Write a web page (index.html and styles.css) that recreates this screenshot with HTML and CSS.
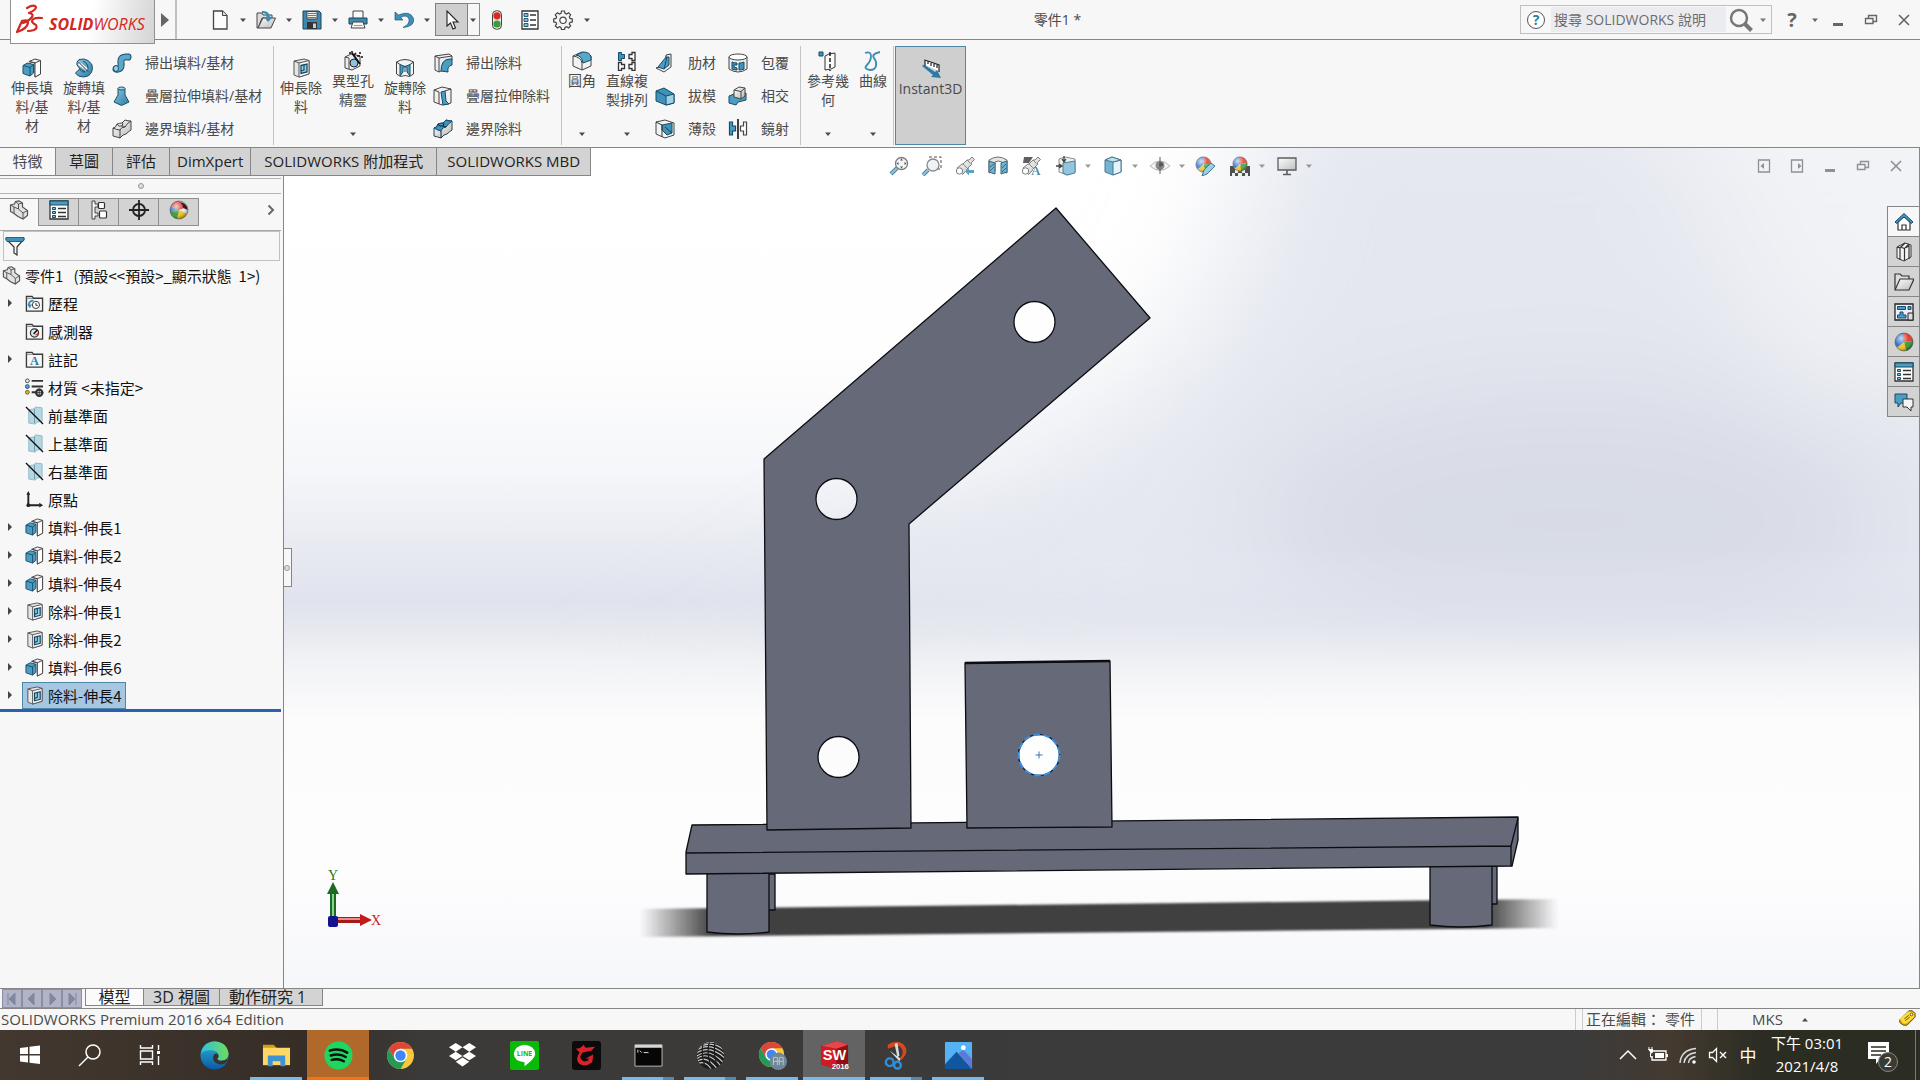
FILE: index.html
```html
<!DOCTYPE html>
<html lang="zh-Hant">
<head>
<meta charset="utf-8">
<meta name="viewport" content="width=device-width, initial-scale=1">
<title>零件1 - SOLIDWORKS Premium 2016</title>
<link rel="stylesheet" href="styles.css">
</head>
<body>
<svg class="sprite" aria-hidden="true">
  <defs>
    <linearGradient id="gBlue" x1="0" y1="0" x2="1" y2="1"><stop offset="0" stop-color="#8cc8e0"/><stop offset="1" stop-color="#2b7ba3"/></linearGradient>
    <linearGradient id="gGray" x1="0" y1="0" x2="1" y2="1"><stop offset="0" stop-color="#fff"/><stop offset="1" stop-color="#b8b8b8"/></linearGradient>
    <linearGradient id="gEdge" x1="0" y1="0" x2="0" y2="1"><stop offset="0" stop-color="#2bb5d8"/><stop offset="1" stop-color="#0c59a4"/></linearGradient>
    <linearGradient id="gEdge2" x1="0" y1="0" x2="1" y2="0"><stop offset="0" stop-color="#2fc2df"/><stop offset="1" stop-color="#6fdc57"/></linearGradient>
    <radialGradient id="gShine" cx=".35" cy=".3" r=".7"><stop offset="0" stop-color="#fff" stop-opacity=".75"/><stop offset=".6" stop-color="#fff" stop-opacity="0"/><stop offset="1" stop-color="#000" stop-opacity=".35"/></radialGradient>
    <clipPath id="sphere"><circle cx="15" cy="15" r="14"/></clipPath>
  </defs>
  <symbol id="caret" viewBox="0 0 8 8"><path d="M1 2.500h6L4 6z" fill="currentColor"/></symbol>
  <symbol id="new" viewBox="0 0 20 20"><path d="M3.500 1h9L17 5.500V19H3.500z" fill="#fdfdfd" stroke="#444" stroke-width="1.300"/><path d="M12.500 1v4.500H17" fill="#ddd" stroke="#444"/></symbol>
  <symbol id="open" viewBox="0 0 20 20"><path d="M1 3h5l1 2h9v3H6L2 18H1z" fill="#ddd" stroke="#444"/><path d="M2 18L7 8h12.500L15 18z" fill="url(#gGray)" stroke="#444"/><path d="M6 1q7-1 8 6h3l-5 5-4-5h2.500Q11 3 6 3z" fill="#3d8db3"/></symbol>
  <symbol id="save" viewBox="0 0 20 20"><path d="M1 1h16l2 2v16H1z" fill="#3e87ad" stroke="#17465f"/><path d="M5 1.500h10V9H5z" fill="#f0f0f0" stroke="#444"/><path d="M6 3.500h8M6 5.500h8M6 7.500h8" stroke="#777"/><path d="M5 12h10v7H5z" fill="#333"/><path d="M11 13.500h3V18h-3z" fill="#ccc"/></symbol>
  <symbol id="print" viewBox="0 0 20 20"><path d="M5 8V1h10v7" fill="#fafafa" stroke="#444"/><path d="M1 8h18v6H1z" fill="#3e87ad" stroke="#17465f"/><path d="M5 12h10l2 6H3z" fill="#f4f4f4" stroke="#444"/><path d="M6 15.500h8" stroke="#999"/></symbol>
  <symbol id="undo" viewBox="0 0 20 20"><path d="M1 2v8h8L6.500 7.500Q13 4 15 9q1 5-6 8.500 12-1 10.500-9Q16 0 4.500 5z" fill="#3f90b8" stroke="#1d5877" stroke-width=".7"/></symbol>
  <symbol id="arrowcur" viewBox="0 0 20 20"><path d="M5 1v15l3.500-3 2.500 6 2.500-1-2.500-6h5z" fill="#fff" stroke="#222" stroke-width="1.100"/></symbol>
  <symbol id="traffic" viewBox="0 0 20 20"><rect x="5.500" y=".7" width="9" height="18.600" rx="4" fill="#e4e4e4" stroke="#444"/><circle cx="10" cy="5.800" r="3.600" fill="#d92b1a"/><circle cx="10" cy="14" r="3.600" fill="#3b9c35"/></symbol>
  <symbol id="listic" viewBox="0 0 20 20"><path d="M2 1h16v18H2z" fill="#fff" stroke="#333" stroke-width="1.300"/><path d="M4 3.500h4v3H4zM4 8.500h4v3H4zM4 13.500h4v3H4z" fill="#7fb9d2" stroke="#245e7c"/><path d="M10 5h6M10 10h6M10 15h6" stroke="#333" stroke-width="1.400"/></symbol>
  <symbol id="gear" viewBox="0 0 20 20"><path d="M8.500 1h3l.5 2.300 1.600.7 2-1.300 2 2.100-1.200 2 .6 1.600 2.300.5v3l-2.300.5-.7 1.500 1.300 2-2 2.100-2-1.300-1.600.7-.5 2.300h-3L8 17.400l-1.600-.7-2 1.300-2.100-2.100 1.300-2L3 12.400l-2.300-.5v-3L3 8.400l.6-1.600-1.300-2 2.100-2.100 2 1.300L8 3.300z" fill="#f4f4f4" stroke="#444" stroke-width="1.200"/><circle cx="10" cy="10.300" r="3.200" fill="#fff" stroke="#444" stroke-width="1.200"/></symbol>
  <symbol id="extrude" viewBox="0 0 20 20"><path d="M7 3.500L13 1l5.500 1.500V16L13 19V5z" fill="#f0f0f0" stroke="#444"/><path d="M13 5v14l5.500-3V2.500z" fill="#fff" stroke="#444"/><path d="M7 3.500L13 5" stroke="#444"/><path d="M1 7.500L5.500 5l6 1.500V15L8 18l-7-2.500z" fill="#4c9dc2" stroke="#1b4e6b"/><path d="M1 7.500L8 9.500l3.500-3M8 9.500V18" fill="none" stroke="#1b4e6b"/></symbol>
  <symbol id="cut" viewBox="0 0 20 20"><path d="M3 3l10-2 5 1.500V16L8 19l-5-2z" fill="#e6e6e6" stroke="#555"/><path d="M8 5v14l10-3V2.500z" fill="#fafafa" stroke="#555"/><path d="M3 3l5 2" stroke="#555"/><path d="M10 7.500l6-1.500v8l-6 1.500z" fill="#9fd0e4" stroke="#174a66" stroke-width="1.300"/><path d="M10 13l3-1V7" fill="none" stroke="#174a66" stroke-width="1.200"/></symbol>
  <symbol id="revolve" viewBox="0 0 20 20"><path d="M5 1.500q5-1.500 9 1 5 3 4.500 8-1 8-9 8.500-6 0-8-4l4-4q2 4 5.500 3l-5-3-3-4q-1-3 2-5.500z" fill="url(#gBlue)" stroke="#1b4e6b"/><path d="M5 5.500l8 6" stroke="#fff" stroke-width="3"/><path d="M5 4.500l9 9" stroke="#222" fill="none"/><path d="M9 3q5 2 5 8" stroke="#1b4e6b" fill="none"/></symbol>
  <symbol id="sweep" viewBox="0 0 20 20"><path d="M4 16Q10 17 9 10T16 4" fill="none" stroke="#184b68" stroke-width="7" stroke-linecap="round"/><path d="M4 16Q10 17 9 10T16 4" fill="none" stroke="#5aa9cb" stroke-width="5" stroke-linecap="round"/><ellipse cx="4" cy="15.500" rx="2.500" ry="3" fill="#9ed0e4" stroke="#184b68"/></symbol>
  <symbol id="loft" viewBox="0 0 20 20"><path d="M6 2.500h7V9l4 7-7.500 3.500L2 16l4-7z" fill="url(#gBlue)" stroke="#1b4e6b"/><ellipse cx="9.500" cy="2.500" rx="3.500" ry="1.500" fill="#a4d3e6" stroke="#1b4e6b"/></symbol>
  <symbol id="boundary" viewBox="0 0 20 20"><path d="M1 9q3 0 4-4 3-1 5-1l3-3q3 1 6 1v9q-3 2-5 4-3 0-6 4-3-1-7-2z" fill="url(#gGray)" stroke="#444"/><path d="M1 9q4 2 7 2 1-3 5-3 2-4 6-6M8 11v8M5 5q1 3 5 2l1-3M13 8q-2-1-3-1" fill="none" stroke="#444"/></symbol>
  <symbol id="boundarycut" viewBox="0 0 20 20"><path d="M1 9q3 0 4-4 3-1 5-1l3-3q3 1 6 1v9q-3 2-5 4-3 0-6 4-3-1-7-2z" fill="url(#gGray)" stroke="#245"/><path d="M1 9q3 0 4-4 3-1 5-1l3-3q3 1 6 1-4 3-6 6-4 0-5 4-4-1-7-3z" fill="#3f93bb" stroke="#174a66"/><path d="M5 5q1 3 5 2l1-3M13 8q-2-1-3-1M8 12v7" fill="none" stroke="#123"/></symbol>
  <symbol id="hole" viewBox="0 0 20 20"><path d="M2 6l6-3 9 2v10l-8 4-7-2z" fill="#eee" stroke="#444"/><path d="M2 6l4 1v11" fill="none" stroke="#444"/><circle cx="11" cy="12" r="4" fill="#8dc4dc" stroke="#222"/><path d="M9 2l8 11" stroke="#111" stroke-width="2"/><path d="M6 2h2M9 0v2M13 2l-2 2M17 1v2M14 5h3M19 5v2" stroke="#111" stroke-width="1.500"/></symbol>
  <symbol id="revcut" viewBox="0 0 20 20"><path d="M1.500 4q8.500-5 17 0v12l-4 2.500q-4-2-9 0l-4-2.500z" fill="#f4f4f4" stroke="#444"/><path d="M5 6.500l5 2 5-2V18l-3-4V9.500L10 8.500 8 9.500V14l-3 4z" fill="#4c9dc2" stroke="#174a66"/><path d="M10 8.500V14M1.500 4L5 6.500M18.500 4L15 6.500" stroke="#174a66"/></symbol>
  <symbol id="sweepcut" viewBox="0 0 20 20"><path d="M2 3l14-2 3 2v4q-6 0-7 9l-6 3-4-2z" fill="#eee" stroke="#444"/><path d="M17 6q-9 0-9 12l7 1q-1-6 4-7V6z" fill="#4c9dc2" stroke="#174a66"/><path d="M2 3l4 2v14M6 5l13-2" fill="none" stroke="#444"/></symbol>
  <symbol id="loftcut" viewBox="0 0 20 20"><path d="M1 4l8-3 9 2v14l-9 2-8-3z" fill="#f0f0f0" stroke="#444"/><path d="M8 6l4-1 1 10 3 3-6 1z" fill="#4c9dc2" stroke="#174a66"/><path d="M1 4l5 2v12M18 3l-6 2" stroke="#444" fill="none"/></symbol>
  <symbol id="fillet" viewBox="0 0 20 20"><path d="M1 5l9-4 9 4v10l-9 4-9-4z" fill="#f2f2f2" stroke="#444"/><path d="M1 5q8 1 9 7v7" fill="none" stroke="#444"/><path d="M6 3l5-2q7 0 8 5v3l-8 3q-1-7-7-8z" fill="#59a8ca" stroke="#174a66"/></symbol>
  <symbol id="pattern" viewBox="0 0 20 20"><path d="M1.500 1.500h3v2h3v4h-3v2h-3z" fill="#3f93bb" stroke="#174a66"/><path d="M18 1.500h-3v2h-3v4h3v2h3zM1.500 11.500h3v2h3v4h-3v2h-3zM18 11.500h-3v2h-3v4h3v2h3z" fill="#fff" stroke="#333" stroke-width="1.300"/></symbol>
  <symbol id="rib" viewBox="0 0 20 20"><path d="M11 2l5-1v13l-7 5-8-4 9-3z" fill="#eee" stroke="#444"/><path d="M11 4L3 14l6 2 5-4V4z" fill="#4c9dc2" stroke="#174a66"/><path d="M9 16l3-12" stroke="#174a66"/></symbol>
  <symbol id="draft" viewBox="0 0 20 20"><path d="M1 5l8-3 10 6v9l-8 2-10-4z" fill="#3f93bb" stroke="#174a66"/><path d="M11 10l8-2v9l-8 2z" fill="#9fd0e4" stroke="#174a66"/><path d="M1 5l10 5" stroke="#174a66"/></symbol>
  <symbol id="shell" viewBox="0 0 20 20"><path d="M1 3l9-2 9 3v12l-9 3-9-4z" fill="#f2f2f2" stroke="#444"/><path d="M7 6l10-2v10l-5 2-5-5z" fill="#3f93bb" stroke="#174a66"/><path d="M1 3l6 3v12M10 8l7 6" fill="none" stroke="#333"/></symbol>
  <symbol id="wrap" viewBox="0 0 20 20"><path d="M1 4v12q9 6 18 0V4" fill="#eee" stroke="#444"/><ellipse cx="10" cy="4" rx="9" ry="3" fill="#fff" stroke="#444"/><path d="M4 9q2 1 5 1v2H6v2l3 1v2q-3 0-5-1zM16 9q-2 1-5 1v7q3 0 5-1z" fill="#3f93bb" stroke="#174a66"/></symbol>
  <symbol id="intersect" viewBox="0 0 20 20"><path d="M1 10l5-2 4 1 8-2v7l-8 2-2 3-7-2z" fill="#4c9dc2" stroke="#174a66"/><path d="M6 4l5-3 6 1v8l-4 3-7-2z" fill="url(#gGray)" stroke="#444"/><path d="M6 4l7 1.500V13M13 5.500L17 2" fill="none" stroke="#444"/></symbol>
  <symbol id="mirror" viewBox="0 0 20 20"><path d="M1.500 3h3v4h3v5h-3v4h-3z" fill="#4c9dc2" stroke="#174a66" stroke-width="1.200"/><path d="M18.500 3h-3v4h-3v5h3v4h3z" fill="#fff" stroke="#444" stroke-width="1.200"/><path d="M10 0v20" stroke="#111" stroke-width="1.600"/></symbol>
  <symbol id="refgeo" viewBox="0 0 20 20"><path d="M1 1h4v4H1z" fill="#3f93bb" stroke="#174a66"/><path d="M7 5l4-2 6-1v14l-4 2-6 1z" fill="#fafafa" stroke="#333"/><path d="M12 1v19" stroke="#111" stroke-width="1.400" stroke-dasharray="4 2"/></symbol>
  <symbol id="curve" viewBox="0 0 20 20"><path d="M2 2q6-2 6 3t-4 9 3 5q5 0 6-4t-2-8 6-6" fill="none" stroke="#3d8db3" stroke-width="1.800"/></symbol>
  <symbol id="instant" viewBox="0 0 22 22"><path d="M5 2l14 6v6L5 8z" fill="#fff"/><path d="M5 9V3l14 5v7M8 4v3M11 5v4M14 7v3M17 8v3" fill="none" stroke="#222" stroke-width="1.200"/><path d="M2 9l2-1.500 11 7.500 2-2 4 8-10-1 2-2z" fill="#2c7ba5"/></symbol>
  <symbol id="part" viewBox="0 0 20 20"><path d="M1.500 5l4-1 1-2.500L10 .800 13.500 3v4l5 3.500v5L14 19l-5-2.500-4-3-3.500-2z" fill="#e2e2e2" stroke="#555" stroke-width="1.200"/><path d="M6.500 1.500l3 2.500 4-1M9.500 4v5l4.500 4 4.500-2.500M14 13v6M1.500 5L5 7l4.500 2M5 7v6.500" fill="none" stroke="#555"/></symbol>
  <symbol id="props" viewBox="0 0 20 20"><path d="M1 1h18v18H1z" fill="#fff" stroke="#333" stroke-width="1.300"/><path d="M1 1h18v4H1z" fill="#4c9dc2" stroke="#174a66"/><path d="M3.500 7.500h3v2h-3zM3.500 11.500h3v2h-3zM3.500 15.500h3v2h-3z" fill="#8cc8e0" stroke="#174a66"/><path d="M9 8.500h8M9 12.500h8M9 16.500h8" stroke="#333" stroke-width="1.400"/></symbol>
  <symbol id="config" viewBox="0 0 20 20"><path d="M3 1h3v3h3v3H6v6h3v3H6v3H3z" fill="#f4f4f4" stroke="#444"/><rect x="9.500" y="2.500" width="6" height="6" rx="1" fill="#fff" stroke="#333" stroke-width="1.200"/><rect x="10.500" y="11" width="7" height="7" rx="1" fill="#fff" stroke="#333" stroke-width="1.200"/></symbol>
  <symbol id="target" viewBox="0 0 20 20"><circle cx="10" cy="10" r="6" fill="none" stroke="#222" stroke-width="1.800"/><path d="M10 0v20M0 10h20" stroke="#222" stroke-width="1.800"/></symbol>
  <symbol id="ball" viewBox="0 0 20 20"><path d="M10 10V1A9 9 0 0 1 19 9z" fill="#e23b2c"/><path d="M10 10L19 9A9 9 0 0 1 12 19z" fill="#3e9b3a"/><path d="M10 10l2 9A9 9 0 0 1 3 15.500z" fill="#f3c51c"/><path d="M10 10l-7 5.500A9 9 0 0 1 10 1z" fill="#2f6fc8"/><circle cx="10" cy="10" r="9" fill="url(#gShine)" stroke="#555" stroke-width=".6"/></symbol>
  <symbol id="dispball" viewBox="0 0 20 20"><path d="M10 10L2 6A9 9 0 0 1 10 1l8.500 6z" fill="#d9322a"/><path d="M10 10L18.500 7A9 9 0 0 1 18 14z" fill="#e8e8e8"/><path d="M10 10l8 4A9 9 0 0 1 8 19z" fill="#f3c51c"/><path d="M10 10l-2 9A9 9 0 0 1 1 11z" fill="#3e9b3a"/><path d="M10 10L1 11A9 9 0 0 1 2 6z" fill="#2f6fc8"/><circle cx="10" cy="10" r="9" fill="url(#gShine)" stroke="#555" stroke-width=".6"/><path d="M11 2q7 1 7.500 8l-4-2q-1-4-3.500-6z" fill="#2b1d1d"/></symbol>
  <symbol id="funnel" viewBox="0 0 20 20"><path d="M1 3h18l-7 8v8l-3-2v-6z" fill="#f6f6f6" stroke="#333" stroke-width="1.200"/><path d="M1 1.500h18V4l-1 1.500H2L1 4z" fill="#3f93bb" stroke="#174a66" stroke-width=".8"/></symbol>
  <symbol id="fbase" viewBox="0 0 20 20"><path d="M1.500 2.500h6l1.500 2h9.500v13.500h-17z" fill="#f6f6f6" stroke="#3a3a3a" stroke-width="1.400"/><path d="M1.500 4.500h7" stroke="#777"/></symbol>
  <symbol id="history" viewBox="0 0 20 20"><use href="#fbase"/><circle cx="11.500" cy="11.500" r="3.800" fill="#fff" stroke="#333"/><path d="M11.500 9.500v2.500h2" fill="none" stroke="#333"/><path d="M4 12q0-5 5-5" stroke="#3d8db3" stroke-width="2" fill="none"/><path d="M2.500 11h5l-2.500 4z" fill="#3d8db3"/></symbol>
  <symbol id="sensor" viewBox="0 0 20 20"><use href="#fbase"/><circle cx="10" cy="11.500" r="4.300" fill="#dbe9f2" stroke="#333" stroke-width="1.300"/><path d="M9 12.500l4-4" stroke="#111" stroke-width="1.500"/><path d="M10 14h4v-3z" fill="#e2421f"/></symbol>
  <symbol id="material" viewBox="0 0 20 20"><path d="M7 3h12M7 9h12M7 15h5" stroke="#333" stroke-width="2"/><circle cx="2.500" cy="3" r="2" fill="#eee" stroke="#444"/><circle cx="2.500" cy="9" r="2" fill="#4cb0d8" stroke="#245"/><circle cx="2.500" cy="15" r="2" fill="#e8b91c" stroke="#654"/><circle cx="15" cy="15.500" r="3.200" fill="none" stroke="#333" stroke-width="2.400"/><path d="M15 11v9M10.500 15.500h9" stroke="#333"/></symbol>
  <symbol id="plane" viewBox="0 0 20 20"><path d="M4 4l6-1 1-2 7 1v14l-6 1-1 2-7-1z" fill="#b5d7e4" stroke="#8fb8c8"/><path d="M10 3v15" stroke="#6e98a8"/><path d="M1 1l18 18" stroke="#111" stroke-width="1.400"/></symbol>
  <symbol id="origin" viewBox="0 0 20 20"><path d="M3.500 4v12h12" fill="none" stroke="#222" stroke-width="2"/><path d="M1.500 5l2-4 2 4zM15 13.500l4 2.500-4 2.500z" fill="#222"/><circle cx="3.500" cy="16" r="2" fill="#222"/></symbol>
  <symbol id="tri" viewBox="0 0 8 8"><path d="M2 0l4 4-4 4z" fill="#444"/></symbol>
  <symbol id="chev" viewBox="0 0 8 12"><path d="M1.500 1.500L6 6l-4.500 4.500" fill="none" stroke="#666" stroke-width="2"/></symbol>
  <symbol id="zoomfit" viewBox="0 0 20 20"><path d="M8 12l-6 6" stroke="#2d6e90" stroke-width="4"/><path d="M8 12l-6 6" stroke="#7fb9d2" stroke-width="2"/><circle cx="12.500" cy="7.500" r="6" fill="#f4f4f4" stroke="#666" stroke-width="1.300"/><path d="M12.500 2.500l1.500 2h-3zM12.500 12.500l1.500-2h-3zM7.500 7.500l2-1.500v3zM17.500 7.500l-2-1.500v3z" fill="#333"/></symbol>
  <symbol id="zoomarea" viewBox="0 0 20 20"><path d="M7 1h12v12h-6" fill="none" stroke="#333" stroke-dasharray="3 2"/><path d="M6 14l-5 5" stroke="#2d6e90" stroke-width="4"/><path d="M6 14l-5 5" stroke="#7fb9d2" stroke-width="2"/><circle cx="11" cy="9" r="6" fill="#eef0f2" stroke="#777" stroke-width="1.300"/></symbol>
  <symbol id="scope" viewBox="0 0 20 20"><path d="M2 12l5-4 1 0 4-4 2 0 3-3 2.500 2.500-3 3v2l-5 5v1l-4 4z" fill="url(#gGray)" stroke="#666"/><path d="M8 8l4 4M12 4l3.500 3.500" stroke="#777"/><circle cx="4.500" cy="15" r="3.200" fill="#fff" stroke="#666"/></symbol>
  <symbol id="prevview" viewBox="0 0 20 20"><use href="#scope"/><path d="M10 15.500l4-4v2.500h5v3h-5v2.500z" fill="#3f93bb"/></symbol>
  <symbol id="section" viewBox="0 0 20 20"><path d="M1 4q9-6 18 0v13l-5-1V6q-4-2-7 0v9l-6 2z" fill="#e0e0e0" stroke="#555"/><path d="M1 5l6 2v11l-6-2zM13 7l6-2v11l-6 2z" fill="#5aa9cb" stroke="#174a66"/><path d="M2 11l4-3M2 15l4-4M14 12l4-4M14 16l4-4" stroke="#174a66"/></symbol>
  <symbol id="orient" viewBox="0 0 20 20"><path d="M3 3l6-2 10 2v13l-8 3-8-3z" fill="#eee" stroke="#777"/><path d="M7 7l12-2v12l-8 2-4-2z" fill="#7fbdd8" stroke="#2c6c8c"/><path d="M8 0v5M6 3l2 3 2-3M0 10h5M3 8l3 2-3 2" fill="none" stroke="#222" stroke-width="1.300"/></symbol>
  <symbol id="style" viewBox="0 0 20 20"><path d="M2 4l7-3 9 3v12l-8 3-8-3z" fill="#5aa9cb" stroke="#2a5f7b"/><path d="M10 6l8-2v12l-8 3z" fill="#e5f2f8" stroke="#2a5f7b"/><path d="M2 4l8 2 8-2-9-3z" fill="#b5dae8" stroke="#2a5f7b"/></symbol>
  <symbol id="eye" viewBox="0 0 20 20"><path d="M0 10q10-10 20 0-10 9-20 0z" fill="#f4f4f4" stroke="#aaa"/><circle cx="10" cy="9.500" r="4.500" fill="#777"/><circle cx="11" cy="8.500" r="2" fill="#333"/><path d="M10 1v17" stroke="#444"/></symbol>
  <symbol id="pencilball" viewBox="0 0 20 20"><use href="#ball" width="17" height="17"/><path d="M9 14l7-7 4 3-8 8-5 2z" fill="#8cc8e0" stroke="#245e7c"/></symbol>
  <symbol id="sceneball" viewBox="0 0 20 20"><path d="M0 10h20v10H0z" fill="#333"/><path d="M2 17h3v3H2zM15 17h3v3h-3zM8 17h4v3H8zM5 14h3v3H5zM12 14h3v3h-3z" fill="#eee"/><use href="#ball" x="2" y="0" width="16" height="16"/></symbol>
  <symbol id="monitor" viewBox="0 0 20 20"><path d="M1 2h18v12H1z" fill="url(#gGray)" stroke="#444" stroke-width="1.300"/><path d="M10 14v4M6 18.500h8" stroke="#444" stroke-width="1.600"/></symbol>
  <symbol id="min" viewBox="0 0 14 14"><path d="M2 11.500h10" stroke="currentColor" stroke-width="3"/></symbol>
  <symbol id="restore" viewBox="0 0 14 14"><path d="M4.500 5V2.500h8v6H9M1.500 5.500H9v5H1.500z" fill="none" stroke="currentColor" stroke-width="1.400"/></symbol>
  <symbol id="close" viewBox="0 0 14 14"><path d="M2 2l10 10M12 2L2 12" stroke="currentColor" stroke-width="1.600"/></symbol>
  <symbol id="paneL" viewBox="0 0 14 14"><path d="M1.500 1h11v12h-11z" fill="none" stroke="currentColor" stroke-width="1.300"/><path d="M7 4L3.500 7 7 10z" fill="currentColor"/></symbol>
  <symbol id="paneR" viewBox="0 0 14 14"><path d="M1.500 1h11v12h-11z" fill="none" stroke="currentColor" stroke-width="1.300"/><path d="M8 4l3.500 3L8 10z" fill="currentColor"/></symbol>
  <symbol id="home" viewBox="0 0 20 20"><path d="M4 10v8h12v-8l-6-6z" fill="#fff" stroke="#333" stroke-width="1.200"/><path d="M8 18v-5h4v5" fill="none" stroke="#333" stroke-width="1.200"/><path d="M1 10l9-8.500L19 10l-1.500 1.500L10 5l-7.500 6.500z" fill="#3f93bb" stroke="#174a66"/></symbol>
  <symbol id="books" viewBox="0 0 20 20"><path d="M3 5l8-4 6 2v12l-7 4-7-3z" fill="#f4f4f4" stroke="#333"/><path d="M3 5l3 1v12M6 6l5-5M7.500 5.500l3 1v12M11 6l4-4M12 5.500l3-1.500v13" fill="none" stroke="#333" stroke-width="1.200"/></symbol>
  <symbol id="folder" viewBox="0 0 20 20"><path d="M1 17V2h5l2 2h7v3" fill="#ddd" stroke="#333" stroke-width="1.200"/><path d="M1 18L6 7h14l-5 11z" fill="url(#gGray)" stroke="#333" stroke-width="1.200"/></symbol>
  <symbol id="palette" viewBox="0 0 20 20"><path d="M1 2h18v16H1z" fill="#eef" stroke="#222" stroke-width="1.300"/><path d="M3.500 4.500h8v3h-8zM14 4.500h3v3h-3zM6 10h3v3h3v3H3.500v-3H6z" fill="#4c9dc2" stroke="#174a66"/><path d="M14 11h5v7h-5z" fill="#ddd" stroke="#222"/></symbol>
  <symbol id="forum" viewBox="0 0 20 20"><path d="M1 2h12v9H7l-3 4v-4H1z" fill="#4c9dc2" stroke="#174a66"/><path d="M9 7h10v8h-2v4l-4-4H9z" fill="#f6f6f6" stroke="#333"/></symbol>
  <symbol id="mag" viewBox="0 0 24 24"><circle cx="10" cy="10" r="8" fill="none" stroke="#777" stroke-width="2.500"/><path d="M15.500 15.500l7 7" stroke="#777" stroke-width="4"/></symbol>
  <symbol id="tag" viewBox="0 0 20 20"><path d="M2 12L12 2h4l3 3v4l-9 9H6l-4-3z" fill="#e2a80f" stroke="#5d4200"/><path d="M2 11L11 3h4l3 2v4l-9 7H6z" fill="#fbdd3c"/><circle cx="15" cy="6" r="1.500" fill="#fff" stroke="#5d4200"/><path d="M7 11l5-4M8 13l5-4" stroke="#5d4200"/></symbol>
  <symbol id="chrome" viewBox="0 0 28 28"><circle cx="14" cy="14" r="13" fill="#f9c93a"/><path d="M14 7.500h11.300A13 13 0 0 0 2.700 7.500l5.700 9.800z" fill="#d9483b"/><path d="M2.700 7.500A13 13 0 0 0 14 27l5.600-9.700-5.600 3-5.600-3z" fill="#259a56"/><circle cx="14" cy="14" r="6.500" fill="#fff"/><circle cx="14" cy="14" r="5" fill="#4285f4"/></symbol>
</svg>

<div class="app">
  <header class="titlebar">
    <div class="logo">
      <svg width="28" height="30" viewBox="0 0 28 30" aria-hidden="true"><g fill="none" stroke="#d3281f" stroke-width="2.200" stroke-linecap="round" stroke-linejoin="round"><path d="M11 4q7-4 9-1 0 3-7 6 5 1 3 4-3 4-9 6"/><path d="M6 17q6-2 6 2-1 6-11 9L6 17"/><path d="M26 14q-9-1-10 3 0 2 4 4 2 3-2 5-3 1-6 1"/></g></svg>
      <span class="wordmark"><b>SOLID</b>WORKS</span>
    </div>
    <button class="logo-more" aria-label="功能表"><svg width="8" height="14" viewBox="0 0 8 14"><path d="M0 0l8 7-8 7z" fill="#666"/></svg></button>
    <div class="quick">
      <button class="q" aria-label="新增"><svg><use href="#new"/></svg></button><button class="c" aria-label="更多"><svg><use href="#caret"/></svg></button>
      <button class="q" aria-label="開啟"><svg><use href="#open"/></svg></button><button class="c" aria-label="更多"><svg><use href="#caret"/></svg></button>
      <button class="q" aria-label="儲存"><svg><use href="#save"/></svg></button><button class="c" aria-label="更多"><svg><use href="#caret"/></svg></button>
      <button class="q" aria-label="列印"><svg><use href="#print"/></svg></button><button class="c" aria-label="更多"><svg><use href="#caret"/></svg></button>
      <button class="q" aria-label="復原"><svg><use href="#undo"/></svg></button><button class="c" aria-label="更多"><svg><use href="#caret"/></svg></button>
      <span class="picked"><button class="w on" aria-label="選取"><svg><use href="#arrowcur"/></svg></button><button class="c" aria-label="更多"><svg><use href="#caret"/></svg></button></span>
      <button class="w" aria-label="重新計算"><svg><use href="#traffic"/></svg></button>
      <button class="w" aria-label="檔案屬性"><svg><use href="#listic"/></svg></button>
      <button class="w" aria-label="選項"><svg><use href="#gear"/></svg></button><button class="c" aria-label="更多"><svg><use href="#caret"/></svg></button>
    </div>
    <h1 class="doc-title">零件1 *</h1>
    <form class="search">
      <span class="search-help">?</span>
      <input type="text" aria-label="搜尋" placeholder="搜尋 SOLIDWORKS 說明">
      <button type="button" class="search-go" aria-label="搜尋"><svg><use href="#mag"/></svg></button>
      <button type="button" class="c" aria-label="搜尋範圍"><svg><use href="#caret"/></svg></button>
    </form>
    <div class="window-ctl">
      <button class="qm">?</button><button class="c" aria-label="說明選單"><svg><use href="#caret"/></svg></button>
      <button class="w" aria-label="最小化"><svg><use href="#min"/></svg></button>
      <button class="w" aria-label="還原"><svg><use href="#restore"/></svg></button>
      <button class="w" aria-label="關閉"><svg><use href="#close"/></svg></button>
    </div>
  </header>

  <nav class="ribbon" aria-label="特徵工具列">
    <section class="group g-boss">
      <button class="big low"><svg><use href="#extrude"/></svg><span>伸長填<br>料/基<br>材</span></button>
      <button class="big low"><svg><use href="#revolve"/></svg><span>旋轉填<br>料/基<br>材</span></button>
      <div class="stack">
        <button><svg><use href="#sweep"/></svg>掃出填料/基材</button>
        <button><svg><use href="#loft"/></svg>疊層拉伸填料/基材</button>
        <button><svg><use href="#boundary"/></svg>邊界填料/基材</button>
      </div>
    </section>
    <section class="group g-cut">
      <button class="big low"><svg><use href="#cut"/></svg><span>伸長除<br>料</span></button>
      <button class="big"><svg><use href="#hole"/></svg><span>異型孔<br>精靈</span><svg class="drop"><use href="#caret"/></svg></button>
      <button class="big low"><svg><use href="#revcut"/></svg><span>旋轉除<br>料</span></button>
      <div class="stack">
        <button><svg><use href="#sweepcut"/></svg>掃出除料</button>
        <button><svg><use href="#loftcut"/></svg>疊層拉伸除料</button>
        <button><svg><use href="#boundarycut"/></svg>邊界除料</button>
      </div>
    </section>
    <section class="group g-feat">
      <button class="big narrow"><svg><use href="#fillet"/></svg><span>圓角</span><svg class="drop"><use href="#caret"/></svg></button>
      <button class="big"><svg><use href="#pattern"/></svg><span>直線複<br>製排列</span><svg class="drop"><use href="#caret"/></svg></button>
      <div class="stack short">
        <button><svg><use href="#rib"/></svg>肋材</button>
        <button><svg><use href="#draft"/></svg>拔模</button>
        <button><svg><use href="#shell"/></svg>薄殼</button>
      </div>
      <div class="stack short">
        <button><svg><use href="#wrap"/></svg>包覆</button>
        <button><svg><use href="#intersect"/></svg>相交</button>
        <button><svg><use href="#mirror"/></svg>鏡射</button>
      </div>
    </section>
    <section class="group g-ref">
      <button class="big"><svg><use href="#refgeo"/></svg><span>參考幾<br>何</span><svg class="drop"><use href="#caret"/></svg></button>
      <button class="big narrow"><svg><use href="#curve"/></svg><span>曲線</span><svg class="drop"><use href="#caret"/></svg></button>
    </section>
    <button class="big instant"><svg><use href="#instant"/></svg><span>Instant3D</span></button>
  </nav>

  <main class="work">
    <nav class="tabs" aria-label="CommandManager">
      <button class="active">特徵</button><button>草圖</button><button>評估</button><button class="tight">DimXpert</button><button>SOLIDWORKS 附加程式</button><button class="last">SOLIDWORKS MBD</button>
    </nav>

    <aside class="panel">
      <div class="grip"><i></i></div>
      <div class="panel-tabs">
        <button class="active" aria-label="特徵樹"><svg><use href="#part"/></svg></button>
        <button aria-label="屬性"><svg><use href="#props"/></svg></button>
        <button aria-label="模型組態"><svg><use href="#config"/></svg></button>
        <button aria-label="尺寸專家"><svg><use href="#target"/></svg></button>
        <button aria-label="顯示"><svg><use href="#dispball"/></svg></button>
        <button class="more" aria-label="更多"><svg><use href="#chev"/></svg></button>
      </div>
      <label class="filter"><svg><use href="#funnel"/></svg><input type="text" aria-label="篩選"></label>
      <ul class="tree">
        <li class="root"><svg class="ic"><use href="#part"/></svg><span>零件1&nbsp;&nbsp; (預設&lt;&lt;預設&gt;_顯示狀態&nbsp; 1&gt;)</span></li>
        <li class="exp"><svg class="tw"><use href="#tri"/></svg><span class="node"><svg class="ic"><use href="#history"/></svg>歷程</span></li>
        <li><span class="node"><svg class="ic"><use href="#sensor"/></svg>感測器</span></li>
        <li class="exp"><svg class="tw"><use href="#tri"/></svg><span class="node"><svg class="ic" viewBox="0 0 20 20"><use href="#fbase"/><text x="10" y="16" class="letter">A</text></svg>註記</span></li>
        <li><span class="node"><svg class="ic"><use href="#material"/></svg>材質 &lt;未指定&gt;</span></li>
        <li><span class="node"><svg class="ic"><use href="#plane"/></svg>前基準面</span></li>
        <li><span class="node"><svg class="ic"><use href="#plane"/></svg>上基準面</span></li>
        <li><span class="node"><svg class="ic"><use href="#plane"/></svg>右基準面</span></li>
        <li><span class="node"><svg class="ic"><use href="#origin"/></svg>原點</span></li>
        <li class="exp"><svg class="tw"><use href="#tri"/></svg><span class="node"><svg class="ic"><use href="#extrude"/></svg>填料-伸長1</span></li>
        <li class="exp"><svg class="tw"><use href="#tri"/></svg><span class="node"><svg class="ic"><use href="#extrude"/></svg>填料-伸長2</span></li>
        <li class="exp"><svg class="tw"><use href="#tri"/></svg><span class="node"><svg class="ic"><use href="#extrude"/></svg>填料-伸長4</span></li>
        <li class="exp"><svg class="tw"><use href="#tri"/></svg><span class="node"><svg class="ic"><use href="#cut"/></svg>除料-伸長1</span></li>
        <li class="exp"><svg class="tw"><use href="#tri"/></svg><span class="node"><svg class="ic"><use href="#cut"/></svg>除料-伸長2</span></li>
        <li class="exp"><svg class="tw"><use href="#tri"/></svg><span class="node"><svg class="ic"><use href="#extrude"/></svg>填料-伸長6</span></li>
        <li class="exp"><svg class="tw"><use href="#tri"/></svg><span class="node sel"><svg class="ic"><use href="#cut"/></svg>除料-伸長4</span></li>
      </ul>
      <div class="rollback"></div>
    </aside>

    <section class="viewport">
      <svg class="scene" viewBox="284 148 1635 840" preserveAspectRatio="xMidYMid slice" role="img" aria-label="零件模型">
        <defs>
          <linearGradient id="sky" x1="0" y1="0" x2="0" y2="1"><stop offset="0" stop-color="#fff"/><stop offset=".24" stop-color="#fefefe"/><stop offset=".38" stop-color="#f6f7fa"/><stop offset=".47" stop-color="#e9ebf2"/><stop offset=".54" stop-color="#e0e3ed"/><stop offset=".57" stop-color="#e6e8ef"/><stop offset=".61" stop-color="#f1f2f5"/><stop offset=".68" stop-color="#fcfcfd"/><stop offset=".86" stop-color="#fdfdfe"/><stop offset="1" stop-color="#f6f7fa"/></linearGradient>
          <linearGradient id="fadeDown" x1="0" y1="148" x2="0" y2="988" gradientUnits="userSpaceOnUse"><stop offset="0" stop-color="#fff"/><stop offset=".48" stop-color="#fff"/><stop offset=".55" stop-color="#888"/><stop offset=".63" stop-color="#000"/></linearGradient>
          <mask id="upper" maskUnits="userSpaceOnUse" x="284" y="148" width="1635" height="840"><rect x="284" y="148" width="1635" height="840" fill="url(#fadeDown)"/></mask>
          <filter id="soft" x="-.5" y="-.5" width="2" height="2"><feGaussianBlur stdDeviation="60"/></filter>
          <filter id="edge"><feGaussianBlur stdDeviation="1"/></filter>
          <linearGradient id="shade" x1="640" y1="0" x2="1558" y2="0" gradientUnits="userSpaceOnUse"><stop offset="0" stop-color="#3f3f3f" stop-opacity="0"/><stop offset=".08" stop-color="#3f3f3f"/><stop offset=".92" stop-color="#3f3f3f"/><stop offset="1" stop-color="#3f3f3f" stop-opacity="0"/></linearGradient>
        </defs>
        <rect x="284" y="148" width="1635" height="840" fill="url(#sky)"/>
        <g mask="url(#upper)"><g filter="url(#soft)">
          <path d="M1270 60H2050V760H600Q900 560 1080 440T1270 60z" fill="#e4e7ef"/>
          <ellipse cx="1570" cy="520" rx="320" ry="130" fill="#d8dbe6"/>
          <path d="M1640 60H2050V380H1800z" fill="#f2f3f6"/>
        </g></g>
        <path d="M640 909L1558 899V928L640 937z" fill="url(#shade)" filter="url(#edge)"/>
        <g fill="#666977" stroke="#0c0d12" stroke-width="1.300" stroke-linejoin="round">
          <path d="M765 874h10v36h-10zM1488 866h9v38h-9z"/>
          <path d="M707 870v62q30 4 62 0v-62zM1430 864v61q30 4 62 0v-61z"/>
          <path d="M692 825L1518 817V840L1512 866L686 874V852z"/>
          <path d="M686 853L1511 846L1518 818M1511 846V866" fill="none"/>
          <path fill-rule="evenodd" d="M1056 208L1150 318L909 524L911 828L767 830L764 459z M1055 322a20.500 20.500 0 1 0-41 0a20.500 20.500 0 1 0 41 0z M857 499a20.500 20.500 0 1 0-41 0a20.500 20.500 0 1 0 41 0z M859 757a20.500 20.500 0 1 0-41 0a20.500 20.500 0 1 0 41 0z"/>
          <path d="M965 663L1110 661L1112 827L967 828z"/>
        </g>
        <path d="M965 663l145-2" stroke="#0c0d12" stroke-width="2.500"/>
        <circle cx="1039" cy="755" r="20.500" fill="#fefefe" stroke="#16243a" stroke-width="1.500"/>
        <circle cx="1039" cy="755" r="20.500" fill="none" stroke="#3b8fe0" stroke-width="2" stroke-dasharray="7 3"/>
        <path d="M1035.500 755h7M1039 751.500v7" stroke="#3b78b8" stroke-width="1"/>
        <g>
          <path d="M333 919V892" stroke="#1d6b22" stroke-width="6"/><path d="M333 919V892" stroke="#8cd08c" stroke-width="2"/><path d="M327 894l6-12 6 12z" fill="#1d6b22"/>
          <path d="M337 920h24" stroke="#a31a1a" stroke-width="6"/><path d="M337 919h24" stroke="#f08a8a" stroke-width="2"/><path d="M360 914l12 6-12 6z" fill="#c01c1c"/>
          <rect x="328" y="916" width="10" height="11" rx="2" fill="#13138e"/>
          <text x="333" y="880" text-anchor="middle" fill="#1d7a22" class="axis">Y</text><text x="376" y="925" text-anchor="middle" fill="#c81e1e" class="axis">X</text>
        </g>
      </svg>
      <div class="splitter"><i></i></div>
      <div class="hud">
        <button aria-label="最適當大小"><svg><use href="#zoomfit"/></svg></button>
        <button aria-label="區域縮放"><svg><use href="#zoomarea"/></svg></button>
        <button aria-label="前一個視角"><svg><use href="#prevview"/></svg></button>
        <button aria-label="剖面視角"><svg><use href="#section"/></svg></button>
        <button aria-label="動態註記"><svg viewBox="0 0 20 20"><path d="M3 1h9l-4 6H2z" fill="#444"/><use href="#scope"/><text x="15" y="19" class="letter">A</text></svg></button>
        <button class="dd" aria-label="視角方位"><svg><use href="#orient"/></svg><svg class="cr"><use href="#caret"/></svg></button>
        <button class="dd" aria-label="顯示樣式"><svg><use href="#style"/></svg><svg class="cr"><use href="#caret"/></svg></button>
        <button class="dd" aria-label="隱藏/顯示"><svg><use href="#eye"/></svg><svg class="cr"><use href="#caret"/></svg></button>
        <button aria-label="編輯外觀"><svg><use href="#pencilball"/></svg></button>
        <button class="dd" aria-label="套用全景"><svg><use href="#sceneball"/></svg><svg class="cr"><use href="#caret"/></svg></button>
        <button class="dd" aria-label="檢視設定"><svg><use href="#monitor"/></svg><svg class="cr"><use href="#caret"/></svg></button>
      </div>
      <div class="doc-ctl">
        <button aria-label="左窗格"><svg><use href="#paneL"/></svg></button>
        <button aria-label="右窗格"><svg><use href="#paneR"/></svg></button>
        <button aria-label="最小化文件"><svg><use href="#min"/></svg></button>
        <button aria-label="還原文件"><svg><use href="#restore"/></svg></button>
        <button aria-label="關閉文件"><svg><use href="#close"/></svg></button>
      </div>
      <div class="taskpane">
        <button class="active" aria-label="資源"><svg><use href="#home"/></svg></button>
        <button aria-label="設計庫"><svg><use href="#books"/></svg></button>
        <button aria-label="檔案Explorer"><svg><use href="#folder"/></svg></button>
        <button aria-label="視圖調色盤"><svg><use href="#palette"/></svg></button>
        <button aria-label="外觀"><svg><use href="#ball"/></svg></button>
        <button aria-label="自訂屬性"><svg><use href="#props"/></svg></button>
        <button aria-label="論壇"><svg><use href="#forum"/></svg></button>
      </div>
    </section>
  </main>

  <nav class="sheet-tabs" aria-label="模型頁籤">
    <div class="steps">
      <button aria-label="第一頁"><svg viewBox="0 0 12 12"><path d="M2 0v12M9 0L3 6l6 6z"/></svg></button>
      <button aria-label="上一頁"><svg viewBox="0 0 12 12"><path d="M8 0L2 6l6 6z"/></svg></button>
      <button aria-label="下一頁"><svg viewBox="0 0 12 12"><path d="M4 0l6 6-6 6z"/></svg></button>
      <button aria-label="最後一頁"><svg viewBox="0 0 12 12"><path d="M10 0v12M3 0l6 6-6 6z"/></svg></button>
    </div>
    <button class="sheet active">模型</button><button class="sheet">3D 視圖</button><button class="sheet">動作研究 1</button>
  </nav>

  <footer class="status">
    <span class="edition">SOLIDWORKS Premium 2016 x64 Edition</span>
    <span class="cell gap"></span>
    <span class="cell mode">正在編輯： 零件</span>
    <span class="cell gap2"></span>
    <button class="units">MKS<svg><use href="#caret"/></svg></button>
    <svg class="tag"><use href="#tag"/></svg>
  </footer>

  <footer class="taskbar">
    <button class="sys" aria-label="開始"><svg width="24" height="24" viewBox="0 0 24 24"><path d="M2 5l8-1v7H2zM11.500 3.800L22 2.500V11H11.500zM2 12.500h8v7l-8-1zM11.500 12.500H22V21l-10.500-1.300z" fill="#fff"/></svg></button>
    <button class="sys" aria-label="搜尋"><svg width="24" height="24" viewBox="0 0 24 24"><circle cx="15" cy="9" r="7" fill="none" stroke="#fff" stroke-width="1.500"/><path d="M10 14l-9 9" stroke="#fff" stroke-width="1.500"/></svg></button>
    <button class="sys view" aria-label="工作檢視"><svg width="24" height="24" viewBox="0 0 24 24"><path d="M2.500 2v3h12V2M2.500 22v-3h12v3M2.500 8h12v8h-12zM20.500 2v5M20.500 13v9" fill="none" stroke="#fff" stroke-width="1.400"/><path d="M19 8h3v3h-3z" fill="#fff"/></svg></button>
    <button class="app-btn" aria-label="Edge"><svg viewBox="0 0 30 30"><circle cx="15" cy="15" r="14.500" fill="url(#gEdge)"/><path d="M1 13Q3 1 15 .5 28 1 29.500 13q0 7-8 7.500-5-1-2-4 0-7-8-7Q4 9 1 13z" fill="url(#gEdge2)"/><path d="M19 16.500q-3 3 2 4 5 0 8-3l-2 5q-4 3-9 1t-4.500-7q1-4 4-3.500 2 1 1.500 3.500z" fill="#3b332b"/></svg></button>
    <button class="app-btn run" aria-label="檔案總管"><svg viewBox="0 0 30 30"><path d="M1 4h11l3 3v4H1z" fill="#d99a12"/><path d="M1 7h28v18H1z" fill="#ffd766"/><path d="M6 15h18v11h-5v-5h-8v5H6z" fill="#3f93d3"/></svg></button>
    <button class="app-btn orange" aria-label="Spotify"><svg viewBox="0 0 30 30"><circle cx="15" cy="15" r="14.500" fill="#1ed760"/><path d="M6 10q10-3 18 2M7 15q9-2.500 15.500 1.500M8 19.500q7-2 12.500 1.500" fill="none" stroke="#111" stroke-width="2.600" stroke-linecap="round"/></svg></button>
    <button class="app-btn" aria-label="Chrome"><svg viewBox="0 0 28 28"><use href="#chrome"/></svg></button>
    <button class="app-btn" aria-label="Dropbox"><svg viewBox="0 0 30 30"><path d="M8 2l7 4.500L8 11 1 6.500zM22 2l7 4.500L22 11l-7-4.500zM8 11l7 4.500L8 20l-7-4.500zM22 11l7 4.500L22 20l-7-4.500zM8 21.500l7-4.500 7 4.500-7 5z" fill="#fff"/></svg></button>
    <button class="app-btn" aria-label="LINE"><svg viewBox="0 0 30 30"><rect width="30" height="30" rx="2" fill="#08bb07"/><path d="M15 4q11 1 11 10-1 5-11 12v-4Q4 21 4 13q1-8 11-9z" fill="#fff"/><text x="15" y="16" font-family="Open Sans" font-size="7" font-weight="bold" text-anchor="middle" fill="#08bb07">LINE</text></svg></button>
    <button class="app-btn" aria-label="Garena"><svg viewBox="0 0 30 30"><rect width="30" height="30" rx="3" fill="#0b0b0b"/><path d="M4 8q5 0 8-4l2 3 10-1-4 4-9 2q-3 3-2 6 3 5 8 2v-2h-3l8-4-1 8q-8 6-14 1-4-5 1-11z" fill="#d8232a"/></svg></button>
    <button class="app-btn run multi" aria-label="命令提示字元"><svg viewBox="0 0 30 30"><path d="M1 4h28v22H1z" fill="#060606" stroke="#bbb"/><path d="M1 4h28v3H1z" fill="#d5d5d5"/><path d="M4 9v3M6 10l2 2M10 12h5" stroke="#ddd"/></svg></button>
    <button class="app-btn run multi" aria-label="Rhino"><svg viewBox="0 0 30 30"><circle cx="15" cy="15" r="14" fill="#1c1c1c"/><g clip-path="url(#sphere)" fill="none" stroke="#c8c8c8" stroke-width="1.200"><path d="M0 10Q14 0 30 14M0 13Q14 3 30 18M0 16Q13 6 28 22M0 19Q12 9 26 26M0 22Q10 13 22 29M0 25Q8 18 17 30M2 7Q16-2 30 10M6 3Q18-2 30 6"/><path d="M8 0Q4 12 10 28M14 0Q10 14 17 30M20 0Q17 14 23 28" stroke="#1c1c1c"/></g></svg></button>
    <button class="app-btn run" aria-label="Chrome 視窗"><svg viewBox="0 0 30 30"><use href="#chrome" width="28" height="28"/><circle cx="21" cy="21" r="9" fill="#6f8798"/><path d="M16 17h4v8M16 17v8M16 21h10M22 17h4v8M22 17v8" fill="none" stroke="#b8c8d0"/></svg></button>
    <button class="app-btn run current" aria-label="SOLIDWORKS"><svg viewBox="0 0 30 30"><path d="M1 5l17-5 11 4v20l-12 5-16-5z" fill="#8e1013"/><path d="M1 5l16 3v21L1 24z" fill="#cf1c22"/><path d="M1 5l17-5 11 4-12 4z" fill="#e7474b"/><text x="15" y="20" font-family="Liberation Sans" font-size="15" font-weight="bold" text-anchor="middle" fill="#fff">SW</text><text x="21" y="29" font-family="Liberation Sans" font-size="8" font-weight="bold" text-anchor="middle" fill="#fff">2016</text></svg></button>
    <button class="app-btn run multi" aria-label="剪取工具"><svg viewBox="0 0 30 30"><path d="M6 4Q14-2 22 3q6 7 1 13-3 5-7 4 7-5 5-11-3-6-9-3L6 8z" fill="#d9481c"/><path d="M13 3l3 14 2-2-2-13zM8 10l10 11 1-3z" fill="#ddd"/><circle cx="8" cy="22" r="4" fill="none" stroke="#2b8fe0" stroke-width="2.500"/><circle cx="16" cy="25" r="3.500" fill="none" stroke="#2b8fe0" stroke-width="2.500"/></svg></button>
    <button class="app-btn run" aria-label="相片"><svg viewBox="0 0 30 30"><rect x="1" y="1" width="28" height="28" rx="1" fill="#54b2f5"/><path d="M1 24l12-13 16 18H1z" fill="#12569f"/><path d="M15 13l5-4 9 10v10z" fill="#5f78d8"/><circle cx="20" cy="7" r="2.500" fill="#fff"/></svg></button>
    <div class="tray">
      <button aria-label="隱藏圖示"><svg viewBox="0 0 20 20"><path d="M2 14l8-8 8 8" fill="none" stroke="#fff" stroke-width="1.500"/></svg></button>
      <button aria-label="電池"><svg viewBox="0 0 20 20"><path d="M5 6h13v9H4v-4" fill="none" stroke="#fff" stroke-width="1.300"/><path d="M7 8h9v5H7zM18 9h2v3h-2zM0 4h5v3q-2 3-3 0z" fill="#fff"/><path d="M1 2v3M4 2v3M2.500 8v4H5" fill="none" stroke="#fff"/></svg></button>
      <button aria-label="Wi-Fi"><svg viewBox="0 0 20 20"><circle cx="16" cy="17" r="1.800" fill="#fff"/><path d="M10.500 18q0-5 7-6.500M6 18Q7 9 18 7.500M2 18Q3 5 18 3.500" fill="none" stroke="#ddd" stroke-width="1.400"/></svg></button>
      <button aria-label="音量"><svg viewBox="0 0 20 20"><path d="M1.500 7.500h3l4-4v13l-4-4h-3z" fill="none" stroke="#fff" stroke-width="1.300"/><path d="M12 7l6 6M18 7l-6 6" stroke="#fff" stroke-width="1.400"/></svg></button>
      <button class="ime">中</button>
      <button class="clock">下午 03:01<br>2021/4/8</button>
      <button class="notice" aria-label="通知"><svg viewBox="0 0 34 34"><path d="M2 4h21v17h-9l-4 5v-5H2z" fill="#fff"/><path d="M5 9h15M5 13h15M5 17h10" stroke="#2b2c22" stroke-width="1.500"/><circle cx="22" cy="24" r="9.500" fill="#3a3c33" stroke="#888"/><text x="22" y="29" font-family="Open Sans" font-size="14" text-anchor="middle" fill="#fff">2</text></svg></button>
      <i class="desk-line"></i>
    </div>
  </footer>
</div>
</body>
</html>
```
FILE: styles.css
```css
* { box-sizing: border-box; }
html, body { margin: 0; height: 100%; }
body {
  font-family: "Open Sans", "Noto Sans CJK TC", sans-serif;
  font-size: 14px;
  line-height: 19px;
  color: #4a4a4a;
  background: #f7f7f7;
}
button {
  font: inherit;
  color: inherit;
  background: none;
  border: 0;
  padding: 0;
  margin: 0;
  display: flex;
  align-items: center;
  justify-content: center;
  white-space: nowrap;
}
input { font: inherit; border: 0; padding: 0; min-width: 0; background: none; outline: 0; }
svg { display: block; flex: none; width: 20px; height: 20px; }
.sprite { position: absolute; width: 0; height: 0; }

.app { display: flex; flex-direction: column; min-height: 100vh; }

/* title bar */
.titlebar {
  display: flex;
  align-items: center;
  height: 40px;
  border-bottom: 1px solid #868686;
}
.logo {
  position: relative;
  z-index: 2;
  align-self: flex-start;
  flex: none;
  display: flex;
  align-items: center;
  gap: 5px;
  width: 145px;
  height: 44px;
  margin-left: 10px;
  padding-left: 5px;
  border: 1px solid #909090;
  border-top: 0;
  background: linear-gradient(100deg, #fff 55%, #d4d4d4);
}
.logo svg { width: 28px; height: 30px; margin-bottom: 6px; }
.wordmark { font-size: 16px; font-style: italic; color: #d3281f; padding-top: 5px; }
.logo-more { width: 22px; height: 39px; border-right: 2px solid #c0c0c0; flex: none; }
.logo-more svg { width: 8px; height: 14px; }
.quick { display: flex; align-items: center; margin-left: 28px; flex: none; }
.quick > .q { width: 30px; height: 32px; }
.c { width: 16px; height: 32px; flex: none; }
.c svg { width: 8px; height: 8px; }
.w { width: 33px; height: 32px; }
.picked { display: flex; border: 1px solid #8a8a8a; height: 33px; width: 45px; }
.picked .on { width: 32px; height: 31px; background: #cfcfcf; box-shadow: 0 0 0 1px #5c8aa5; }
.picked .c { width: 12px; }
.doc-title { flex: 1; margin: 0; text-align: center; font-size: 14px; font-weight: 400; }
.search { display: flex; align-items: center; width: 252px; height: 29px; border: 1px solid #c0c0c0; flex: none; color: #777; }
.search-help {
  width: 18px;
  height: 18px;
  margin: 0 6px;
  border: 1px solid #555;
  border-radius: 50%;
  background: #fff;
  color: #2d7da5;
  font-weight: 700;
  line-height: 16px;
  text-align: center;
}
.search input { flex: 1; height: 25px; padding-left: 3px; background: #ebecf0; font-size: 14px; color: #6c6c6c; }
.search input::placeholder { color: #6c6c6c; opacity: 1; }
.search-go { width: 29px; height: 27px; }
.search-go svg { width: 24px; height: 24px; }
.window-ctl { display: flex; align-items: center; margin-left: 4px; color: #666; flex: none; }
.window-ctl .c { width: 13px; }
.window-ctl .w svg { width: 14px; height: 14px; }
.qm { width: 32px; font-size: 20px; font-weight: 700; }

/* ribbon */
.ribbon { display: flex; height: 108px; padding: 6px 0 2px 6px; border-bottom: 1px solid #868686; }
.group { display: flex; border-right: 1px solid #c4c4c4; flex: none; }
.g-boss { width: 268px; }
.g-cut { width: 288px; padding-left: 1px; }
.g-feat { width: 239px; padding-left: 1px; }
.g-ref { width: 93px; padding-left: 1px; }
.big {
  flex-direction: column;
  justify-content: flex-start;
  width: 52px;
  padding-top: 5px;
  flex: none;
}
.big.low { padding-top: 12px; }
.big .drop { width: 8px; height: 8px; margin: auto 0 7px; }
.big.narrow { width: 38px; }
.stack { display: grid; grid-template-rows: repeat(3, 33px); padding-left: 2px; }
.stack button { justify-content: flex-start; gap: 13px; }
.stack.short { width: 73px; }
.instant { width: 71px; padding-top: 10px; margin-left: 1px; background: #cfcfcf; border: 1px solid #4f87a6; }
.instant svg { width: 22px; height: 22px; }

/* work area */
.work { flex: 1; display: grid; grid-template: 28px 1fr / 284px 1fr; }
.tabs { grid-area: 1 / 1 / 2 / 3; z-index: 2; justify-self: start; display: flex; font-size: 15px; color: #222; }
.tabs button { background: #d3d3d3; border: solid #868686; border-width: 0 1px 1px 0; padding: 0 13px; height: 28px; }
.tabs .active { width: 56px; padding: 0; background: #f7f7f7; color: #4a4a4a; }
.tabs .tight { padding: 0 7px; }
.tabs .last { padding: 0 10px; }

.panel { grid-area: 2 / 1; border-right: 1px solid #868686; padding-top: 2px; }
.grip { height: 16px; margin-right: 2px; border: solid #b4b4b4; border-width: 1px 0; display: flex; align-items: center; justify-content: center; }
.grip i, .splitter i { width: 6px; height: 6px; border-radius: 50%; border: 1px solid #999; background: #ddd; }
.panel-tabs { display: flex; margin-right: 2px; padding: 4px 0; border-bottom: 1px solid #a8a8a8; }
.panel-tabs button { width: 41px; height: 28px; margin-left: -1px; background: #d3d3d3; border: 1px solid #909090; padding-bottom: 4px; }
.panel-tabs .active { width: 40px; background: #f7f7f7; border-color: #909090 transparent transparent; }
.panel-tabs .more { background: none; border: 0; width: 20px; margin-left: auto; }
.more svg { width: 8px; height: 12px; }
.filter { display: flex; align-items: center; height: 30px; margin: 0 3px; padding-left: 1px; border: 1px solid #c0c0c0; }
.filter input { flex: 1; height: 26px; }
.tree { list-style: none; margin: 0; padding: 0; font-size: 15px; color: #111; font-family: "Noto Sans CJK TC", sans-serif; }
.tree li { display: flex; align-items: center; height: 28px; padding-left: 22px; white-space: nowrap; }
.tree .exp { padding-left: 6px; }
.tree .root { padding-left: 2px; gap: 4px; }
.tw { width: 8px; height: 8px; margin-right: 8px; }
.ic { width: 19px; height: 19px; }
.node { display: flex; align-items: center; gap: 4px; height: 27px; padding: 0 3px 0 2px; border: 1px solid transparent; }
.sel { background: #a6c6e2; border-color: #4f87a6; }
.rollback { height: 3px; margin-right: 2px; background: #2b5fb0; }
.letter { font: bold 13px "Liberation Serif", serif; text-anchor: middle; fill: #2d7da5; }

.viewport { grid-area: 1 / 2 / 3 / 3; position: relative; overflow: hidden; border-right: 1px solid #868686; }
.scene { position: absolute; inset: 0; width: 100%; height: 100%; }
.axis { font-family: "Liberation Serif", serif; font-size: 14px; }
.splitter { position: absolute; left: -1px; top: 400px; width: 9px; height: 39px; background: #f7f7f7; border: 1px solid #868686; border-left: 0; display: flex; align-items: center; justify-content: center; }
.hud { position: absolute; top: 8px; left: 37%; display: flex; margin-left: -6px; opacity: .85; }
.hud button { width: 33px; height: 20px; }
.hud .dd { width: 47px; gap: 8px; padding-left: 5px; }
.hud .cr { width: 8px; height: 8px; color: #888; }
.doc-ctl { position: absolute; top: 11px; right: 7px; display: flex; color: #8e9094; }
.doc-ctl button { width: 33px; height: 14px; }
.doc-ctl svg { width: 14px; height: 14px; }
.taskpane { position: absolute; top: 58px; right: 0; width: 32px; border: solid #868686; border-width: 1px 0 0 1px; }
.taskpane button { width: 31px; height: 30px; background: #d3d3d3; border-bottom: 1px solid #868686; }
.taskpane .active { background: #f7f7f7; }

/* model tabs */
.sheet-tabs { display: flex; align-items: flex-start; height: 20px; border-top: 1px solid #868686; font-size: 16px; color: #222; }
.steps { display: flex; margin: 0 3px 0 2px; }
.steps button { width: 20px; height: 19px; background: #b0b4c6; border: 1px solid #8b8fa3; }
.steps svg { width: 12px; height: 12px; fill: #8286a0; stroke: #8286a0; }
.sheet { height: 17px; padding: 0 9px; background: #d3d3d3; border: solid #868686; border-width: 0 1px 1px 0; }
.sheet:last-child { padding-right: 16px; }
.sheet.active { width: 59px; background: #fbfbfb; border-left-width: 1px; }

/* status bar */
.status { display: flex; align-items: stretch; height: 22px; border-top: 1px solid #868686; padding-right: 4px; }
.edition { flex: 1; padding-left: 1px; font-size: 15px; line-height: 21px; }
.cell { border-left: 1px solid #ccc; }
.gap { width: 7px; }
.gap2 { width: 17px; border-right: 1px solid #ccc; }
.mode { width: 119px; padding-left: 3px; font-size: 15px; line-height: 21px; }
.units { width: 180px; gap: 18px; justify-content: flex-start; padding-left: 34px; font-size: 15px; }
.units svg { width: 8px; height: 8px; transform: rotate(180deg); }
.tag { width: 18px; height: 18px; }

/* taskbar */
.taskbar {
  display: flex;
  height: 50px;
  color: #fff;
  background: linear-gradient(90deg, #42382f 0, #362d27 16%, #3b3a39 22%, #3b3b3b 82%, #443a30 87%, #2b2c22 92%);
}
.sys { width: 60px; }
.sys svg { width: 24px; height: 24px; }
.view { margin-right: 3px; }
.app-btn { width: 62px; }
.app-btn svg { width: 29px; height: 29px; }
.run { background: linear-gradient(#76b9ed, #76b9ed) bottom / 52px 3px no-repeat; }
.multi { background: linear-gradient(90deg, #76b9ed 41px, #5688ad 41px) bottom / 52px 3px no-repeat; }
.orange { background: linear-gradient(#f7720b, #f7720b) bottom / 62px 3px no-repeat #b0682b; }
.current { background: linear-gradient(#76b9ed, #76b9ed) bottom / 62px 3px no-repeat #636363; }
.tray { display: flex; margin-left: auto; }
.tray button { width: 30px; }
.tray .ime { font-size: 17px; }
.tray .clock { width: 88px; font-size: 15px; line-height: 23px; text-align: center; }
.tray .notice { width: 64px; }
.tray .notice svg { width: 34px; height: 34px; }
.desk-line { width: 5px; border-left: 1px solid #7a7a72; }
```
